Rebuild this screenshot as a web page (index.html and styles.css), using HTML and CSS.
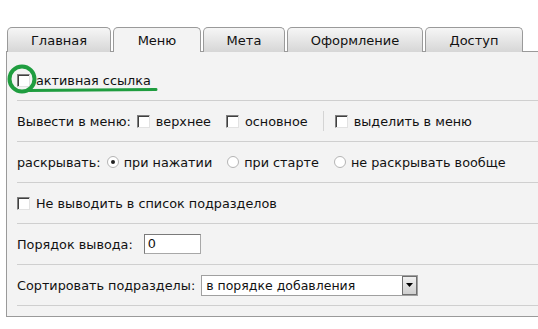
FILE: index.html
```html
<!DOCTYPE html>
<html>
<head>
<meta charset="utf-8">
<link rel="stylesheet" href="styles.css">
</head>
<body>
<div class="page">
  <div class="tabs">
    <div class="tab t1">Главная</div>
    <div class="tab t2 active">Меню</div>
    <div class="tab t3">Мета</div>
    <div class="tab t4">Оформление</div>
    <div class="tab t5">Доступ</div>
  </div>
  <div class="panel">
    <div class="row first">
      <span class="cb"></span><span class="lbl">активная ссылка</span>
    </div>
    <div class="row">
      <span class="txt">Вывести в меню:</span>
      <span class="cb"></span><span class="lbl">верхнее</span>
      <span class="cb"></span><span class="lbl">основное</span>
      <span class="vsep"></span>
      <span class="cb"></span><span class="lbl">выделить в меню</span>
    </div>
    <div class="row">
      <span class="txt">раскрывать:</span>
      <span class="rb on"></span><span class="lbl">при нажатии</span>
      <span class="rb"></span><span class="lbl">при старте</span>
      <span class="rb"></span><span class="lbl">не раскрывать вообще</span>
    </div>
    <div class="row">
      <span class="cb"></span><span class="lbl">Не выводить в список подразделов</span>
    </div>
    <div class="row">
      <span class="txt wide">Порядок вывода:</span>
      <span class="input">0</span>
    </div>
    <div class="row">
      <span class="txt">Сортировать подразделы:</span>
      <span class="select"><span class="sel-text">в порядке добавления</span><span class="sel-btn"><svg width="7" height="4" viewBox="0 0 7 4"><path d="M0 0H7L3.5 4Z" fill="#000"/></svg></span></span>
    </div>
  </div>
  <svg class="mark" width="170" height="40" viewBox="0 0 170 40">
    <circle cx="22" cy="17" r="12.5" fill="none" stroke="#1f9d3f" stroke-width="4"/>
    <path d="M27 28.5 L156 27.5" fill="none" stroke="#1f9d3f" stroke-width="3" stroke-linecap="round"/>
  </svg>
</div>
</body>
</html>
```

FILE: styles.css
```css
html, body {
  margin: 0;
  padding: 0;
  background: #ffffff;
}
.page {
  position: relative;
  width: 538px;
  height: 329px;
  overflow: hidden;
  font-family: "DejaVu Sans", Verdana, sans-serif;
  font-size: 12.8px;
  color: #111;
}
.tabs {
  display: flex;
  gap: 2px;
  padding: 27px 0 0 7px;
  height: 24px;
  position: relative;
  z-index: 2;
}
.tab {
  box-sizing: border-box;
  height: 25px;
  border: 1px solid #9a9a9a;
  border-bottom: none;
  border-radius: 5px 5px 0 0;
  background: linear-gradient(#f6f6f6, #d6d6d6);
  display: flex;
  align-items: center;
  justify-content: center;
  font-size: 13px;
  padding-top: 1px;
  color: #111;
}
.tab.active {
  background: #f3f3f3;
}
.t1 { width: 104px; }
.t2 { width: 88px; }
.t3 { width: 82px; }
.t4 { width: 136px; }
.t5 { width: 98px; }
.panel {
  margin-left: 6px;
  background: #f3f3f3;
  border: 1px solid #9a9a9a;
  border-right: none;
  padding: 8px 0 10px 10px;
  position: relative;
  z-index: 1;
}
.row {
  display: flex;
  align-items: center;
  height: 40px;
  border-bottom: 1px solid #cfcfcf;
  white-space: nowrap;
}
.cb {
  box-sizing: border-box;
  width: 13px;
  height: 13px;
  background: #fff;
  border: 1px solid;
  border-color: #808080 #e2e2e2 #e2e2e2 #808080;
  box-shadow: inset 1px 1px 0 #404040;
  flex: none;
  margin-right: 6px;
}
.rb {
  box-sizing: border-box;
  width: 12px;
  height: 12px;
  border-radius: 50%;
  background: #fff;
  border: 1px solid #b4b4b4;
  flex: none;
  margin-right: 5px;
  position: relative;
}
.rb.on::after {
  content: "";
  position: absolute;
  left: 3px;
  top: 3px;
  width: 4px;
  height: 4px;
  border-radius: 50%;
  background: #222;
}
.txt { margin-right: 6px; }
.txt.wide { margin-right: 11px; }
.lbl { margin-right: 15px; }
.vsep {
  width: 1px;
  height: 20px;
  background: #d4d4d4;
  margin: 0 11px 0 0;
}
.input {
  box-sizing: border-box;
  width: 57px;
  height: 20px;
  background: #fff;
  border: 1px solid;
  border-color: #7a7a7a #a8a8a8 #a8a8a8 #7a7a7a;
  padding: 2px 3px;
  line-height: 14px;
}
.select {
  box-sizing: border-box;
  width: 217px;
  height: 21px;
  background: #fff;
  border: 1px solid #a0a0a0;
  display: flex;
  align-items: stretch;
  font-size: 12.5px;
}
.sel-text {
  flex: 1;
  padding: 0 4px;
  line-height: 19px;
}
.sel-btn {
  box-sizing: border-box;
  width: 15px;
  border: 1px solid #6f6f6f;
  background: linear-gradient(#f0f0f0, #cfcfcf);
  display: flex;
  align-items: center;
  justify-content: center;
}
.mark {
  position: absolute;
  left: 0;
  top: 62px;
  z-index: 3;
}
```
